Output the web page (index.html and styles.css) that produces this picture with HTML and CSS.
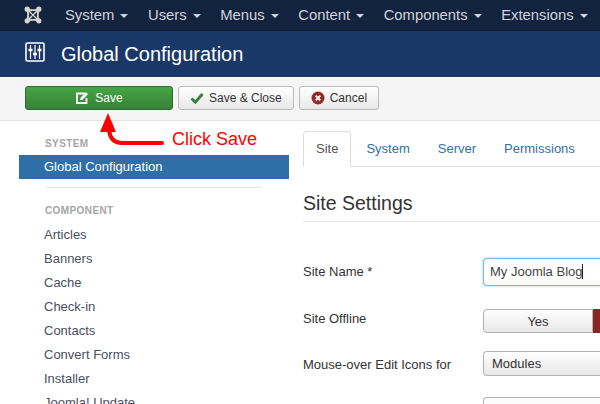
FILE: index.html
```html
<!DOCTYPE html>
<html lang="en">
<head>
    <meta charset="UTF-8">
    <title>Global Configuration</title>
    <link rel="stylesheet" href="styles.css">
</head>
<body>
    <nav class="navbar">
        <svg class="joomla-logo" viewBox="0 0 18 18" width="18" height="18">
            <path d="M3 3 Q9 5.500 15 3 Q12.500 9 15 15 Q9 12.500 3 15 Q5.500 9 3 3Z" fill="none" stroke="#cfcfca" stroke-width="2"/>
            <path d="M4 4 L14 14M14 4 L4 14" stroke="#cfcfca" stroke-width="1.600"/>
            <g fill="#d5d5d0">
                <circle cx="3.200" cy="3.200" r="2.600"/>
                <circle cx="14.800" cy="3.200" r="2.600"/>
                <circle cx="3.200" cy="14.800" r="2.600"/>
                <circle cx="14.800" cy="14.800" r="2.600"/>
            </g>
            <g fill="#12233f">
                <circle cx="9" cy="6.300" r="1.100"/>
                <circle cx="9" cy="11.700" r="1.100"/>
                <circle cx="6.300" cy="9" r="1.100"/>
                <circle cx="11.700" cy="9" r="1.100"/>
            </g>
        </svg>
        <ul class="nav-menu">
            <li>System <span class="caret"></span></li>
            <li>Users <span class="caret"></span></li>
            <li>Menus <span class="caret"></span></li>
            <li>Content <span class="caret"></span></li>
            <li>Components <span class="caret"></span></li>
            <li>Extensions <span class="caret"></span></li>
        </ul>
    </nav>

    <header class="page-title">
        <svg class="title-icon" viewBox="0 0 20 20" width="20" height="20">
            <rect x="1" y="1" width="18" height="18" rx="1.500" fill="none" stroke="#fff" stroke-width="1.600"/>
            <path d="M5.500 3v14M10 3v14M14.500 3v14" stroke="#fff" stroke-width="1.200"/>
            <path d="M3.500 8h4M8 12h4M12.500 8h4" stroke="#fff" stroke-width="2.400"/>
        </svg>
        <h1>Global Configuration</h1>
    </header>

    <div class="toolbar">
        <button class="btn btn-save">
            <svg viewBox="0 0 14 14" width="14" height="14">
                <path d="M10 2.500H2v9.500h9.500V7" fill="none" stroke="#fff" stroke-width="1.800"/>
                <path d="M5 9.300l.6-2.500L11 1.300l2 2-5.400 5.400z" fill="#fff"/>
            </svg>
            Save
        </button>
        <button class="btn">
            <svg viewBox="0 0 14 14" width="14" height="14">
                <path d="M1.500 7.500l3.800 3.700 7.200-8.200" fill="none" stroke="#378137" stroke-width="2.900"/>
            </svg>
            Save &amp; Close
        </button>
        <button class="btn">
            <svg viewBox="0 0 14 14" width="14" height="14">
                <circle cx="7" cy="7" r="6.500" fill="#942a25"/>
                <path d="M4.700 4.700l4.600 4.600M9.300 4.700l-4.600 4.600" stroke="#fff" stroke-width="1.900"/>
            </svg>
            Cancel
        </button>
    </div>

    <div class="content">
        <aside class="sidebar">
            <div class="side-heading first">System</div>
            <div class="side-item active">Global Configuration</div>
            <div class="side-divider"></div>
            <div class="side-heading">Component</div>
            <div class="side-item">Articles</div>
            <div class="side-item">Banners</div>
            <div class="side-item">Cache</div>
            <div class="side-item">Check-in</div>
            <div class="side-item">Contacts</div>
            <div class="side-item">Convert Forms</div>
            <div class="side-item">Installer</div>
            <div class="side-item">Joomla! Update</div>
        </aside>

        <main class="settings">
            <ul class="tabs">
                <li class="tab active">Site</li>
                <li class="tab">System</li>
                <li class="tab">Server</li>
                <li class="tab">Permissions</li>
            </ul>
            <h2>Site Settings</h2>

            <div class="form-row row-name">
                <label>Site Name *</label>
                <div class="text-input">My Joomla Blog<span class="cursor"></span></div>
            </div>
            <div class="form-row row-offline">
                <label>Site Offline</label>
                <div class="toggle">
                    <span class="toggle-yes">Yes</span>
                    <span class="toggle-no"></span>
                </div>
            </div>
            <div class="form-row row-edit">
                <label>Mouse-over Edit Icons for</label>
                <div class="select">Modules</div>
            </div>
            <div class="form-row row-last">
                <label></label>
                <div class="select"></div>
            </div>
        </main>
    </div>

    <!-- annotation drawn over the page -->
    <svg class="annotation-arrow" viewBox="0 0 70 40" width="70" height="40">
        <path d="M62 30 H22 C14 30 10 26 9 17" fill="none" stroke="#f00" stroke-width="4" stroke-linecap="round"/>
        <path d="M8 0 L0 19 L16 19 Z" fill="#f00"/>
    </svg>
    <div class="annotation-text">Click Save</div>
</body>
</html>
```

FILE: styles.css
```css
html, body {
    margin: 0;
    padding: 0;
}

body {
    position: relative;
    width: 600px;
    height: 404px;
    overflow: hidden;
    background: #fff;
    font-family: "Liberation Sans", Arial, sans-serif;
    font-size: 13px;
    color: #3d4555;
}

ul {
    margin: 0;
    padding: 0;
    list-style: none;
}

/* --- Top menu --- */
.navbar {
    height: 30px;
    display: flex;
    align-items: center;
    background: #12233f;
    border-bottom: 1px solid #0e1b31;
    padding-left: 24px;
}

.joomla-logo {
    flex-shrink: 0;
}

.nav-menu {
    display: flex;
    margin-left: 23px;
    padding-bottom: 1px;
    gap: 19.5px;
    white-space: nowrap;
    color: #d2d4d8;
    font-size: 14.8px;
}

.caret {
    display: inline-block;
    width: 0;
    height: 0;
    margin-left: 2px;
    vertical-align: middle;
    border-top: 4px solid #d2d4d8;
    border-left: 4px solid transparent;
    border-right: 4px solid transparent;
}

/* --- Title bar --- */
.page-title {
    height: 46px;
    display: flex;
    align-items: center;
    background: #1a3867;
    padding-left: 25px;
    color: #fff;
}

.title-icon {
    margin-right: 16px;
    margin-top: -4px;
}

.page-title h1 {
    margin: 0;
    font-size: 20px;
    font-weight: normal;
}

/* --- Toolbar --- */
.toolbar {
    height: 34px;
    display: flex;
    gap: 5px;
    padding: 9px 0 0 25px;
    background: #f5f5f5;
    border-bottom: 1px solid #e3e3e3;
}

.btn {
    height: 24px;
    box-sizing: border-box;
    display: flex;
    align-items: center;
    gap: 5px;
    padding: 0 11px;
    font: inherit;
    font-size: 12px;
    color: #333;
    background: linear-gradient(#fff, #e8e8e8);
    border: 1px solid #bbb;
    border-radius: 3px;
}

.btn-save {
    width: 148px;
    justify-content: center;
    gap: 6px;
    padding: 0;
    color: #fff;
    background: linear-gradient(#46a546, #378137);
    border-color: #2c6b2c;
}

/* --- Main area --- */
.content {
    display: flex;
}

.sidebar {
    width: 270px;
    margin-left: 19px;
    flex-shrink: 0;
}

.side-heading {
    padding-left: 26px;
    margin-top: 16px;
    margin-bottom: 6px;
    font-size: 10px;
    line-height: 13px;
    font-weight: bold;
    letter-spacing: 0.4px;
    text-transform: uppercase;
    color: #a5a5a5;
}

.side-heading.first {
    margin-bottom: 5px;
}

.side-item {
    height: 24px;
    line-height: 24px;
    padding-left: 25px;
    color: #4a4f5e;
}

.side-item.active {
    background: #2f6fa8;
    color: #fff;
}

.side-divider {
    height: 1px;
    margin: 8px 27px 0;
    background: #e5e5e5;
}

.settings {
    flex: 1;
    min-width: 0;
    margin-left: 14px;
    padding-top: 10px;
}

.tabs {
    display: flex;
    height: 36px;
    box-sizing: border-box;
    border-bottom: 1px solid #ddd;
}

.tab {
    height: 36px;
    box-sizing: border-box;
    line-height: 36px;
    padding: 0 13px;
    margin-right: 2px;
    color: #3071a9;
}

.tab.active {
    padding: 0 12px;
    color: #555;
    background: #fff;
    border: 1px solid #ddd;
    border-bottom-color: #fff;
    border-radius: 4px 4px 0 0;
    line-height: 34px;
}

.settings h2 {
    margin: 25px 0 0;
    padding-bottom: 7px;
    font-size: 19.5px;
    line-height: 22px;
    font-weight: normal;
    color: #333;
    border-bottom: 1px solid #e5e5e5;
}

.form-row {
    display: flex;
    align-items: flex-start;
}

.form-row label {
    width: 180px;
    flex-shrink: 0;
    line-height: 17px;
    color: #333;
}

.row-name {
    margin-top: 36px;
}

.row-name label {
    padding-top: 5px;
}

.row-offline {
    margin-top: 23px;
}

.row-offline label {
    padding-top: 1px;
}

.row-edit {
    margin-top: 18px;
}

.row-edit label {
    padding-top: 5px;
}

.row-last {
    margin-top: 21px;
}

.text-input {
    width: 140px;
    height: 28px;
    box-sizing: border-box;
    flex-shrink: 0;
    padding-left: 6px;
    line-height: 26px;
    color: #444;
    background: #fff;
    border: 1px solid #7db7ea;
    border-right: 0;
    border-radius: 4px 0 0 4px;
    box-shadow: 0 0 3px #a9d2f5;
}

.cursor {
    display: inline-block;
    width: 1px;
    height: 15px;
    vertical-align: -3px;
    background: #222;
}

.toggle {
    display: flex;
    width: 117px;
    height: 24px;
    flex-shrink: 0;
}

.toggle-yes {
    width: 110px;
    box-sizing: border-box;
    text-align: center;
    line-height: 23px;
    color: #333;
    background: linear-gradient(#fff, #e8e8e8);
    border: 1px solid #b3b3b3;
    border-radius: 4px 0 0 4px;
}

.toggle-no {
    flex: 1;
    background: #8a2522;
}

.select {
    width: 117px;
    height: 25px;
    box-sizing: border-box;
    flex-shrink: 0;
    padding-left: 8px;
    line-height: 24px;
    color: #333;
    background: linear-gradient(#fff, #e8e8e8);
    border: 1px solid #b3b3b3;
    border-right: 0;
    border-radius: 4px 0 0 4px;
}

/* --- Annotation --- */
.annotation-arrow {
    position: absolute;
    left: 100px;
    top: 113px;
}

.annotation-text {
    position: absolute;
    left: 172px;
    top: 128px;
    font-size: 18px;
    line-height: 22px;
    color: #f00;
}
```
